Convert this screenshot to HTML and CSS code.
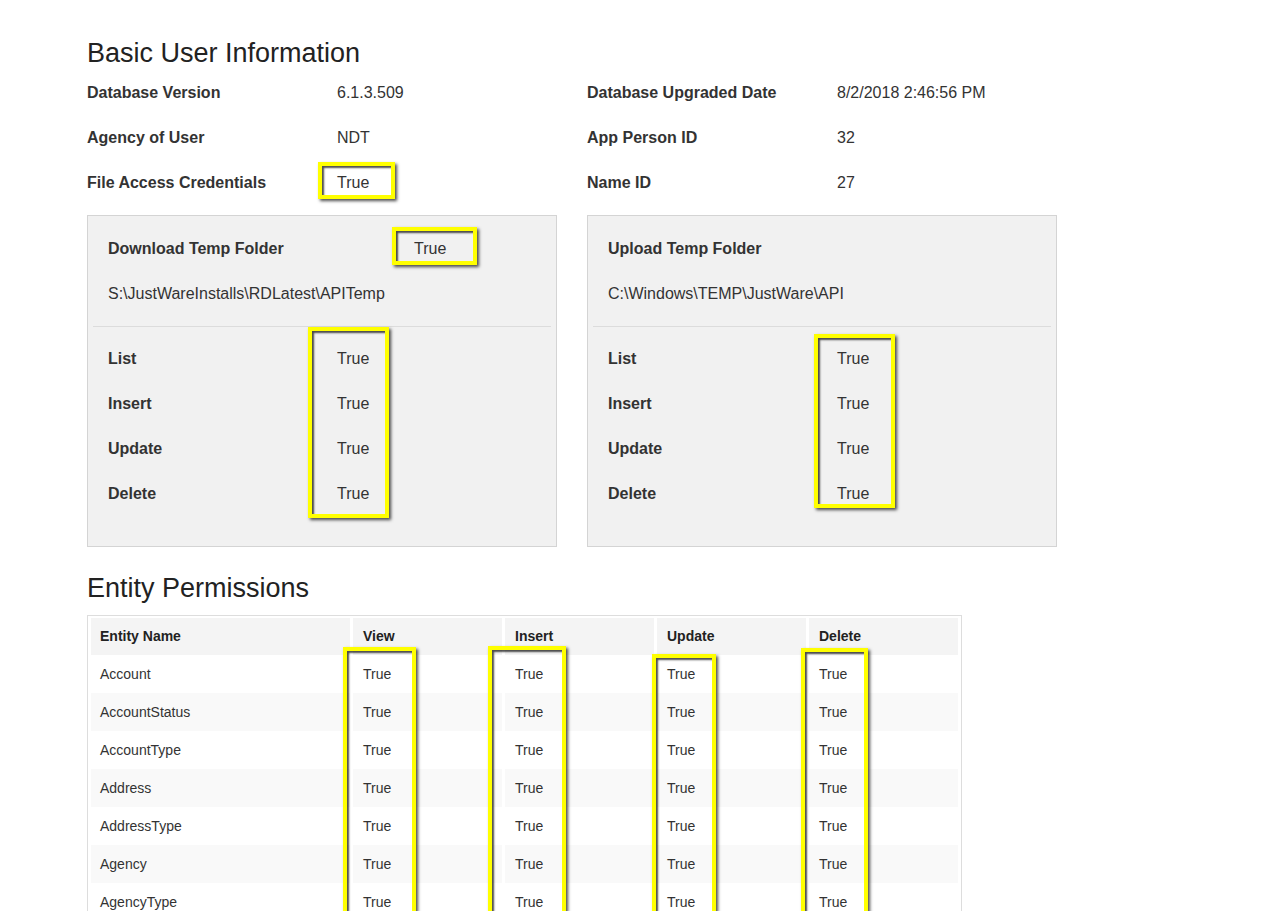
FILE: index.html
```html
<!DOCTYPE html>
<html>
<head>
<meta charset="utf-8">
<title>Basic User Information</title>
<link rel="stylesheet" href="styles.css">
</head>
<body>
<div class="page">
  <h1 class="title">Basic User Information</h1>
  <div class="info-grid">
    <div class="lbl">Database Version</div><div class="val">6.1.3.509</div>
    <div class="lbl">Database Upgraded Date</div><div class="val">8/2/2018 2:46:56 PM</div>
    <div class="lbl">Agency of User</div><div class="val">NDT</div>
    <div class="lbl">App Person ID</div><div class="val">32</div>
    <div class="lbl">File Access Credentials</div><div class="val">True</div>
    <div class="lbl">Name ID</div><div class="val">27</div>
  </div>

  <div class="panels">
    <section class="panel">
      <div class="prow"><span class="plabel plabel-wide">Download Temp Folder</span><span class="val">True</span></div>
      <div class="prow"><span class="val">S:\JustWareInstalls\RDLatest\APITemp</span></div>
      <hr class="sep">
      <div class="prow"><span class="plabel">List</span><span class="val">True</span></div>
      <div class="prow"><span class="plabel">Insert</span><span class="val">True</span></div>
      <div class="prow"><span class="plabel">Update</span><span class="val">True</span></div>
      <div class="prow"><span class="plabel">Delete</span><span class="val">True</span></div>
    </section>
    <section class="panel">
      <div class="prow"><span class="plabel">Upload Temp Folder</span></div>
      <div class="prow"><span class="val">C:\Windows\TEMP\JustWare\API</span></div>
      <hr class="sep">
      <div class="prow"><span class="plabel">List</span><span class="val">True</span></div>
      <div class="prow"><span class="plabel">Insert</span><span class="val">True</span></div>
      <div class="prow"><span class="plabel">Update</span><span class="val">True</span></div>
      <div class="prow"><span class="plabel">Delete</span><span class="val">True</span></div>
    </section>
  </div>

  <h1 class="title title-2">Entity Permissions</h1>
  <table class="perm">
    <colgroup>
      <col class="c-name"><col class="c-perm"><col class="c-perm"><col class="c-perm"><col class="c-perm">
    </colgroup>
    <thead>
      <tr><th>Entity Name</th><th>View</th><th>Insert</th><th>Update</th><th>Delete</th></tr>
    </thead>
    <tbody>
      <tr><td>Account</td><td>True</td><td>True</td><td>True</td><td>True</td></tr>
      <tr><td>AccountStatus</td><td>True</td><td>True</td><td>True</td><td>True</td></tr>
      <tr><td>AccountType</td><td>True</td><td>True</td><td>True</td><td>True</td></tr>
      <tr><td>Address</td><td>True</td><td>True</td><td>True</td><td>True</td></tr>
      <tr><td>AddressType</td><td>True</td><td>True</td><td>True</td><td>True</td></tr>
      <tr><td>Agency</td><td>True</td><td>True</td><td>True</td><td>True</td></tr>
      <tr><td>AgencyType</td><td>True</td><td>True</td><td>True</td><td>True</td></tr>
    </tbody>
  </table>

  <div class="mark mark-fac"></div>
  <div class="mark mark-dl"></div>
  <div class="mark mark-list-l"></div>
  <div class="mark mark-list-r"></div>
  <div class="mark mark-col mark-view"></div>
  <div class="mark mark-col mark-ins"></div>
  <div class="mark mark-col mark-upd"></div>
  <div class="mark mark-col mark-del"></div>
</div>
</body>
</html>
```
FILE: styles.css
```css
html, body {
  margin: 0;
  padding: 0;
  overflow: hidden;
  background: #ffffff;
}

body {
  font-family: "Liberation Sans", Arial, sans-serif;
  color: #333333;
  font-size: 16px;
}

.page {
  position: relative;
  padding: 38px 0 0 87px;
  min-height: 911px;
  box-sizing: border-box;
}

.title {
  margin: 0 0 2px;
  font-size: 27px;
  line-height: 30px;
  font-weight: normal;
  color: #222222;
}

.title-2 {
  margin: 26px 0 12px;
}

.info-grid {
  display: grid;
  grid-template-columns: 250px 250px 250px 250px;
  grid-auto-rows: 45px;
  align-items: center;
}

.lbl {
  font-weight: bold;
  color: #333333;
}

.val {
  color: #333333;
}

.panels {
  display: flex;
  gap: 30px;
  margin-top: 10px;
}

.panel {
  width: 470px;
  box-sizing: border-box;
  background: #f1f1f1;
  border: 1px solid #d4d4d4;
  padding: 10px 0 30px;
}

.prow {
  display: flex;
  align-items: center;
  height: 45px;
  padding-left: 20px;
}

.plabel {
  width: 229px;
  font-weight: bold;
  color: #333333;
}

.plabel-wide {
  width: 306px;
}

.sep {
  margin: 10px 5px 9px;
  border: 0;
  border-top: 1px solid #dcdcdc;
  height: 0;
}

.perm {
  width: 875px;
  table-layout: fixed;
  border: 1px solid #dddddd;
  border-collapse: separate;
  border-spacing: 3px 0;
  padding: 2px 0 0;
  font-size: 14px;
}

.c-name { width: 259px; }
.c-perm { width: 149px; }

.perm th {
  height: 35px;
  background: #f4f4f4;
  text-align: left;
  font-weight: bold;
  color: #222222;
  padding: 0 9px 2px;
  vertical-align: middle;
}

.perm td {
  height: 38px;
  padding: 0 9px;
  vertical-align: middle;
  color: #333333;
}

.perm th + th,
.perm td + td {
  padding-left: 10px;
}

.perm tbody tr:nth-child(even) td {
  background: #f9f9f9;
}

.mark {
  position: absolute;
  box-sizing: border-box;
  border: 4px solid #ffff00;
  box-shadow: 2px 2px 3px rgba(0, 0, 0, 0.7), inset 2px 2px 2px rgba(0, 0, 0, 0.7);
}

.mark-fac { left: 318px; top: 162px; width: 77px; height: 37px; }
.mark-dl { left: 392px; top: 227px; width: 85px; height: 38px; }
.mark-list-l { left: 308px; top: 327px; width: 81px; height: 191px; }
.mark-list-r { left: 814px; top: 334px; width: 81px; height: 174px; }

.mark-col { height: 320px; }
.mark-view { left: 343px; top: 647px; width: 73px; }
.mark-ins { left: 488px; top: 646px; width: 78px; }
.mark-upd { left: 652px; top: 654px; width: 64px; }
.mark-del { left: 801px; top: 648px; width: 67px; }
```
